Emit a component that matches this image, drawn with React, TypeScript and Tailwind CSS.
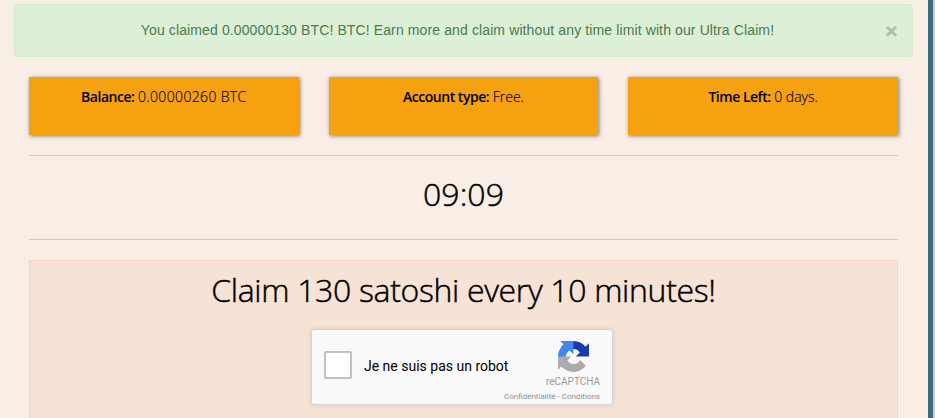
import React from "react";

const stats = [
  { label: "Balance:", value: "0.00000260 BTC", spacing: "tracking-[0.35px]" },
  { label: "Account type:", value: "Free.", spacing: "tracking-normal" },
  { label: "Time Left:", value: "0 days.", spacing: "tracking-normal" },
];

function Alert() {
  return (
    <div className="ml-[14px] mr-[15px] h-[53px] rounded border border-[#d6e9c6] bg-[#deefd8] flex items-center pl-[15px] pr-[14px] font-['Liberation_Sans',sans-serif] text-[14px] leading-5 text-[#4b7a4d]">
      <p className="flex-1 pb-[2px] text-center tracking-[0.117px]">
        You claimed 0.00000130 BTC! BTC! Earn more and claim without any time limit with our Ultra Claim!
      </p>
      <button className="w-[13px] pb-px text-[21px] leading-none font-bold text-black opacity-20 [-webkit-text-stroke:0.6px_#000]">
        ×
      </button>
    </div>
  );
}

function StatCard({ label, value, spacing }: { label: string; value: string; spacing: string }) {
  return (
    <div className="h-[58px] bg-[#f6a10f] pt-[10px] text-center text-[14px] leading-5 shadow-[1px_1px_4px_rgba(0,0,0,0.5)]">
      <b className="font-semibold tracking-[-0.48px]">{label}</b>{" "}
      <span className={`font-light [-webkit-text-stroke:0.15px_#000] ${spacing}`}>{value}</span>
    </div>
  );
}

function RecaptchaLogo() {
  return (
    <svg viewBox="0 0 64 64" className="w-[31px] h-[31px]">
      <path fill="#1c3aa9" d="M64 31.955l-.033-1.37V4.687l-7.16 7.16C50.948 4.674 42.033.093 32.05.093c-10.4 0-19.622 4.96-25.458 12.64l11.736 11.86a15.55 15.55 0 0 1 4.754-5.334c2.05-1.6 4.952-2.906 8.968-2.906.485 0 .86.057 1.135.163 4.976.393 9.288 3.14 11.828 7.124l-8.307 8.307L64 31.953" />
      <path fill="#4285f4" d="M31.862.094l-1.37.033H4.594l7.16 7.16C4.58 13.147 0 22.06 0 32.046c0 10.4 4.96 19.622 12.64 25.458L24.5 45.768a15.55 15.55 0 0 1-5.334-4.754c-1.6-2.05-2.906-4.952-2.906-8.968 0-.485.057-.86.163-1.135.393-4.976 3.14-9.288 7.124-11.828l8.307 8.307L31.86.095" />
      <path fill="#ababab" d="M.001 32.045l.033 1.37v25.898l7.16-7.16c5.86 7.173 14.774 11.754 24.76 11.754 10.4 0 19.622-4.96 25.458-12.64l-11.736-11.86a15.55 15.55 0 0 1-4.754 5.334c-2.05 1.6-4.952 2.906-8.968 2.906-.485 0-.86-.057-1.135-.163-4.976-.393-9.288-3.14-11.828-7.124l8.307-8.307c-10.522.04-22.4.066-27.295-.005" />
    </svg>
  );
}

function Recaptcha() {
  return (
    <div className="ml-[281px] w-[302px] h-[76px] rounded-[3px] border border-[#d3d3d3] bg-[#f9f9f9] shadow-[0_0_4px_1px_rgba(0,0,0,0.08)] flex justify-between px-3 font-['Roboto',sans-serif]">
      <div className="flex pt-[21px]">
        <div className="w-7 h-7 rounded-[2px] border-2 border-[#c1c1c1] bg-white"></div>
        <p className="ml-3 pt-[7px] text-[14px] leading-[17px] whitespace-nowrap text-black">
          Je ne suis pas un robot
        </p>
      </div>
      <div className="w-0 flex flex-col items-end pt-[11px] whitespace-nowrap text-[#9b9b9b]">
        <div className="mr-[11px]">
          <RecaptchaLogo />
        </div>
        <p className="mt-[4px] text-[10px] leading-[12px]">reCAPTCHA</p>
        <p className="mt-[4px] text-[8px] leading-[10px] text-[#8f8f8f]">Confidentialité - Conditions</p>
      </div>
    </div>
  );
}

export default function App() {
  return (
    <div className="flex h-[418px] overflow-hidden bg-[#b1d7e2] font-['Open_Sans',sans-serif] text-black">
      <main className="w-[933px] shrink-0 border-r-[5px] border-[#3f6b7f] bg-[#f9eee6] pt-1">
        <Alert />
        <div className="ml-[29px] mr-[30px] mt-5">
          <div className="grid grid-cols-3 gap-[30px]">
            {stats.map((s) => (
              <StatCard key={s.label} label={s.label} value={s.value} spacing={s.spacing} />
            ))}
          </div>
          <hr className="mt-5 border-[#cbc8c7]" />
          <h2 className="h-[83px] pt-5 text-center text-[32px] leading-9 font-light tracking-[0.1px] [-webkit-text-stroke:0.45px_#000]">
            09:09
          </h2>
          <hr className="border-[#cbc8c7]" />
          <section className="mt-5 h-[170px] border border-[#f2d4bf] bg-[#f6e3d6]">
            <h2 className="h-[68px] pt-[11px] text-center text-[32px] leading-9 font-light tracking-[-0.33px] whitespace-nowrap [-webkit-text-stroke:0.45px_#000]">
              Claim 130 satoshi every 10 minutes!
            </h2>
            <Recaptcha />
          </section>
        </div>
      </main>
    </div>
  );
}
